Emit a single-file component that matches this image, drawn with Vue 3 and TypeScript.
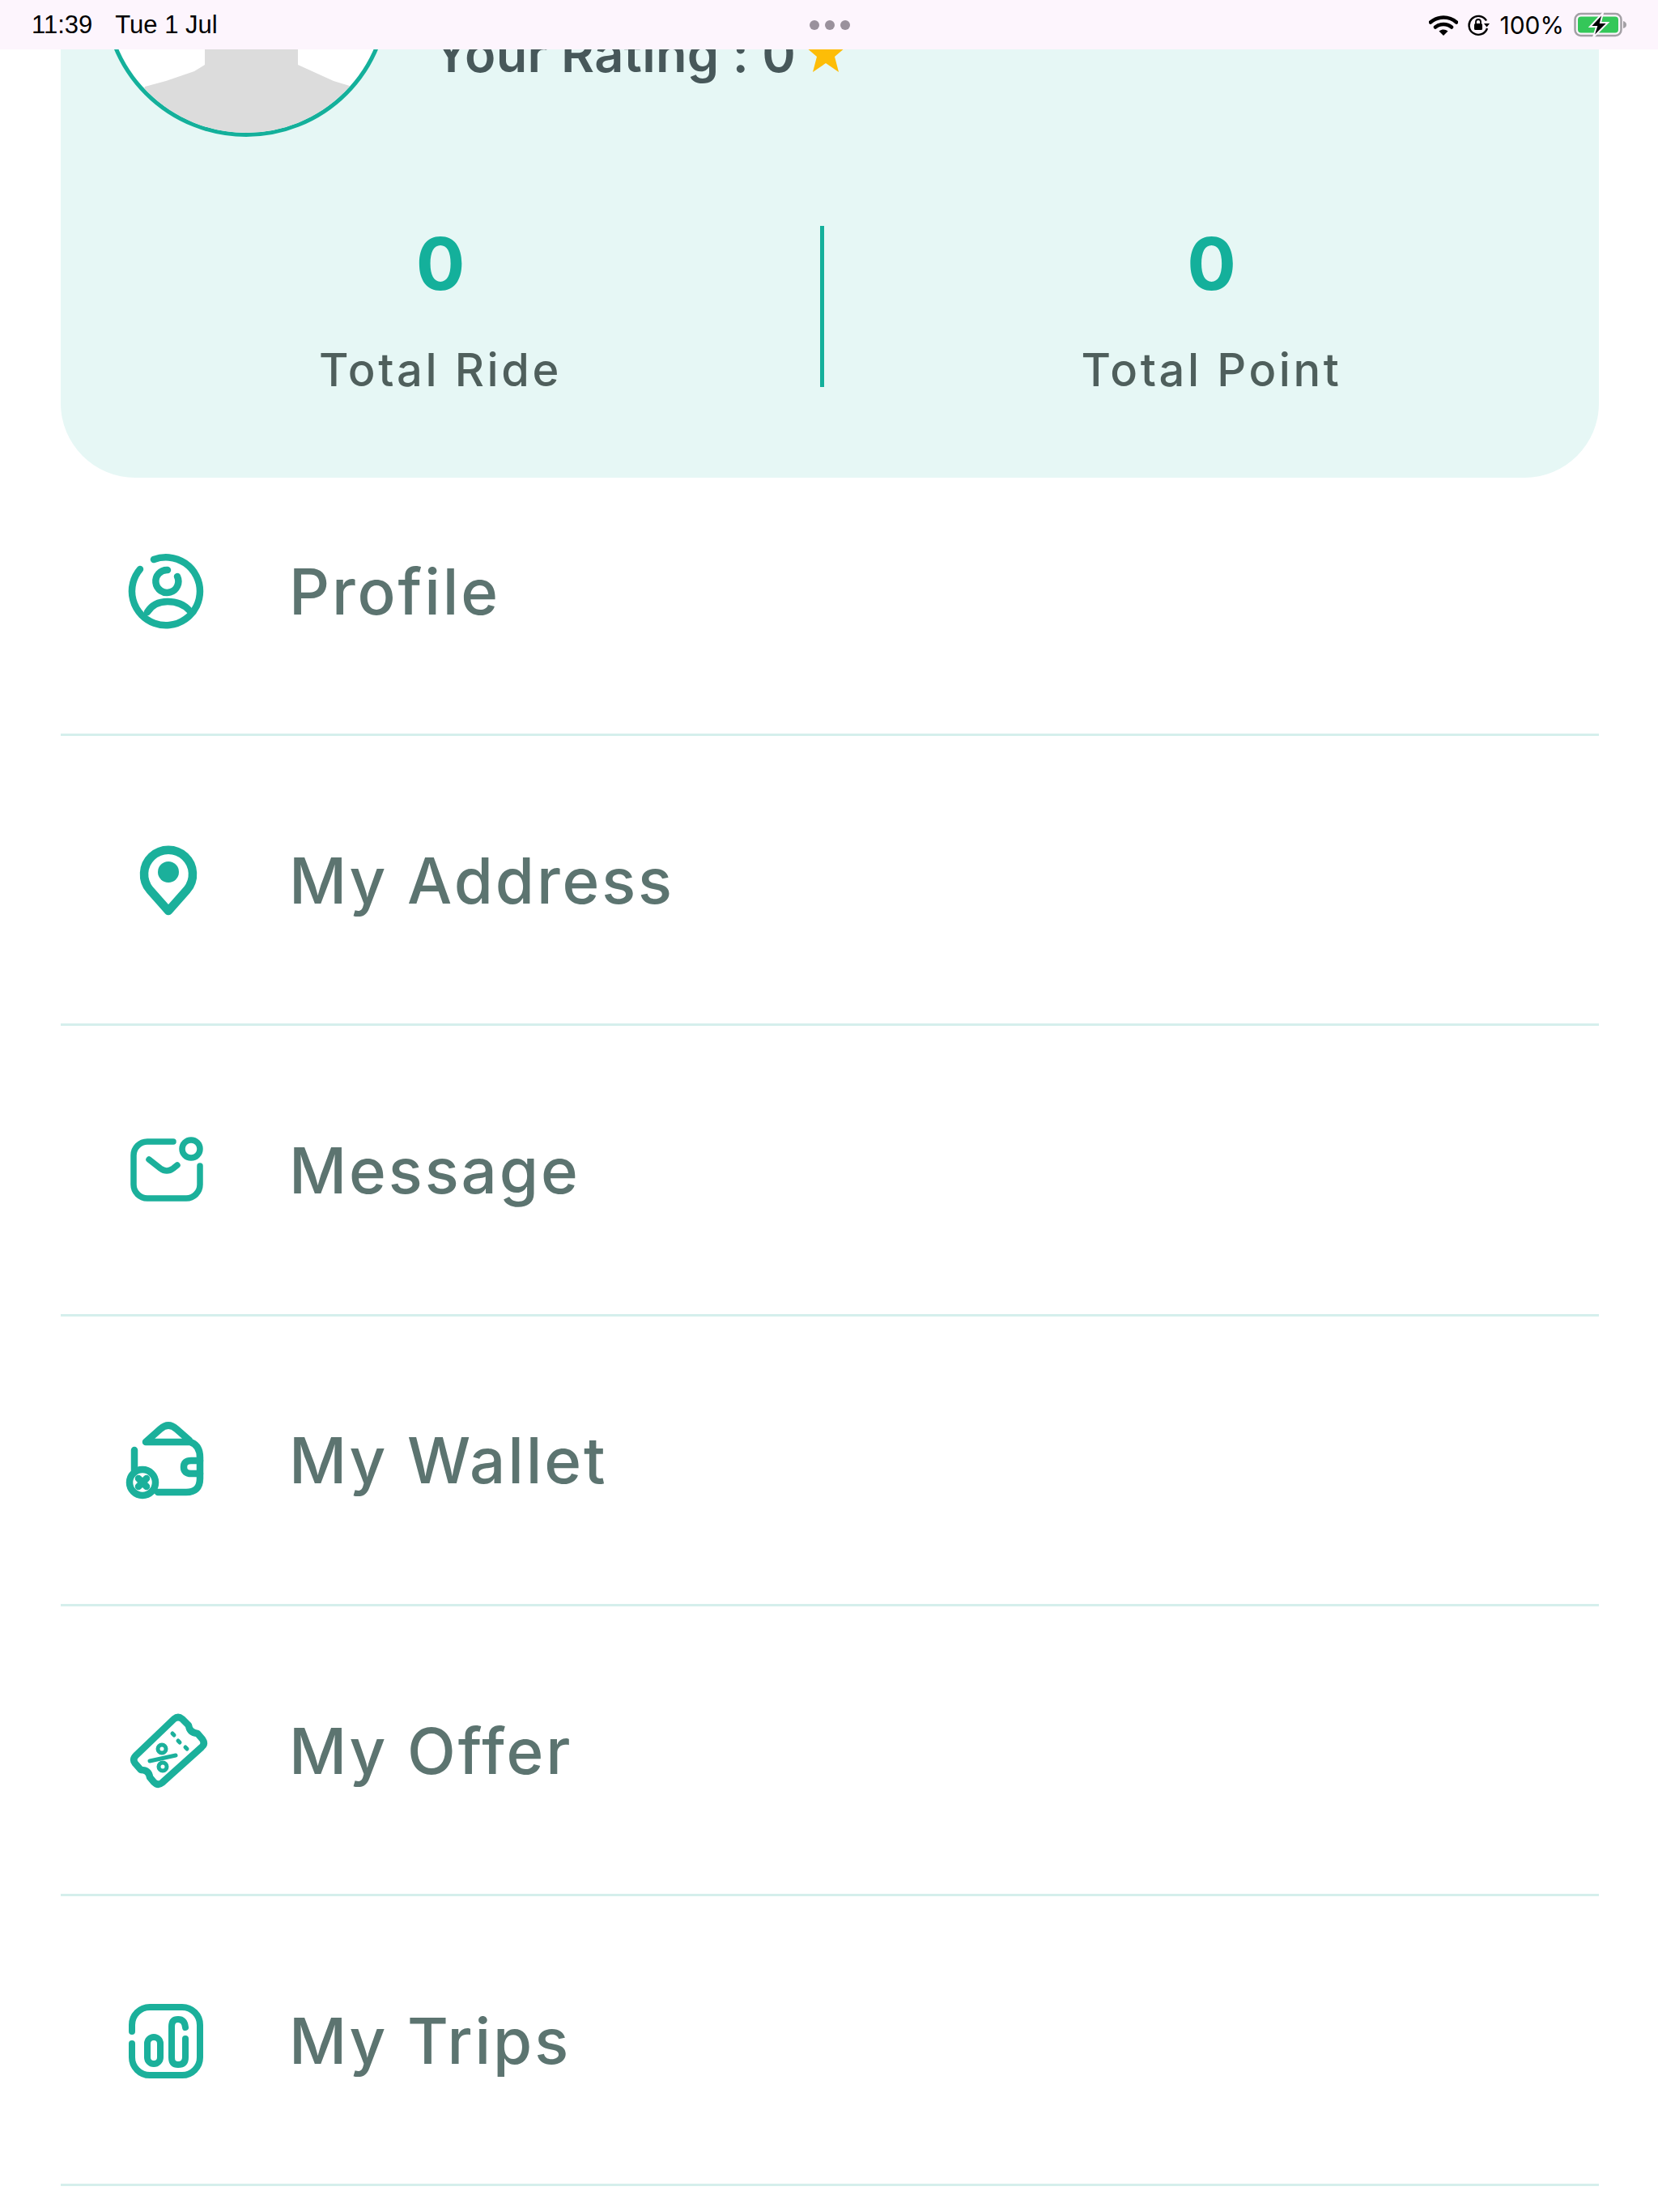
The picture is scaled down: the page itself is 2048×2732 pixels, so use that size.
<script setup lang="ts">
interface MenuItem {
  key: string
  label: string
}

const menu: MenuItem[] = [
  { key: 'profile', label: 'Profile' },
  { key: 'address', label: 'My Address' },
  { key: 'message', label: 'Message' },
  { key: 'wallet', label: 'My Wallet' },
  { key: 'offer', label: 'My Offer' },
  { key: 'trips', label: 'My Trips' }
]
</script>

<template>
  <div class="screen">
    <!-- iPad status bar -->
    <header class="status-bar">
      <div class="status-left">
        <span>11:39</span>
        <span>Tue 1 Jul</span>
      </div>
      <div class="status-dots"><i></i><i></i><i></i></div>
      <div class="status-right">
        <svg class="wifi" width="36" height="26" viewBox="0 0 36 26">
          <path d="M2 9.500C11 1.500 25 1.500 34 9.500" fill="none" stroke="#000" stroke-width="4.500" stroke-linecap="round" />
          <path d="M8 15.500C13.500 10.800 22.500 10.800 28 15.500" fill="none" stroke="#000" stroke-width="4.500" stroke-linecap="round" />
          <path d="M12.500 20.500C15.500 17.800 20.500 17.800 23.500 20.500L18 26Z" fill="#000" />
        </svg>
        <svg class="lock" width="28" height="28" viewBox="0 0 28 28">
          <path d="M24 8.500A11.500 11.500 0 1 0 25 18" fill="none" stroke="#000" stroke-width="2.400" />
          <path d="M21 12H28L24.500 16.500Z" fill="#000" />
          <rect x="9" y="12" width="10" height="8" rx="1.500" fill="#000" />
          <path d="M11 12V10A3 3 0 0 1 17 10V12" fill="none" stroke="#000" stroke-width="1.800" />
        </svg>
        <span class="battery-text">100%</span>
        <svg class="battery" width="66" height="32" viewBox="0 0 66 32">
          <rect x="1.500" y="2" width="57" height="27" rx="7" fill="none" stroke="#a3a0a5" stroke-width="2.500" />
          <rect x="5" y="5.500" width="50" height="20" rx="4" fill="#34c759" />
          <path d="M61 11C64 12 65 13.500 65 15.500C65 17.500 64 19 61 20Z" fill="#a3a0a5" />
          <path d="M36 1L20 18H28L24 31L42 13H33Z" fill="#000" stroke="#fdf5fd" stroke-width="2" />
        </svg>
      </div>
    </header>

    <main class="content">
      <section class="summary-card">
        <div class="user-row">
          <div class="avatar">
            <svg width="344" height="344" viewBox="5 5 344 344">
              <path d="M126 200V265L113 273L78 285L52 292L30 354H326L308 292L285 285L241 265V200Z" fill="#dcdcdc" />
            </svg>
          </div>
          <div class="rating">
            <span>Your Rating : 0</span>
            <svg class="rating-star" width="52" height="50" viewBox="0 0 52 50">
              <path d="M26 0L33 18H51L37 30L42 49L26 38L10 49L15 30L1 18H19Z" fill="#fdbd07" />
            </svg>
          </div>
        </div>

        <div class="stats">
          <div class="stat">
            <div class="stat-value">0</div>
            <div class="stat-label">Total Ride</div>
          </div>
          <div class="stat-divider"></div>
          <div class="stat">
            <div class="stat-value">0</div>
            <div class="stat-label">Total Point</div>
          </div>
        </div>
      </section>

      <nav class="menu">
        <div v-for="item in menu" :key="item.key" class="menu-row" :class="`menu-row--${item.key}`">
          <svg class="menu-icon" width="140" height="140" viewBox="0 0 140 140" fill="none" stroke="#1bb09b" stroke-linecap="round" stroke-linejoin="round">
            <g v-if="item.key === 'profile'" stroke-width="8.500">
              <path d="M58 31A42 42 0 1 1 41 43" />
              <path d="M75 44A14 14 0 1 0 87 52" />
              <path d="M50 96Q58 83 75 83Q92 83 102 94" />
            </g>
            <g v-else-if="item.key === 'address'">
              <path d="M78 107L55 81A30 30 0 1 1 101 81Z" stroke-width="10.500" />
              <circle cx="78" cy="59" r="13" fill="#1bb09b" stroke="none" />
            </g>
            <g v-else-if="item.key === 'message'" stroke-width="7.500">
              <path d="M84 30H52A17 17 0 0 0 35 47V83A17 17 0 0 0 52 100H100A17 17 0 0 0 117 83V60" />
              <circle cx="106" cy="39" r="11" />
              <path d="M54 52L68 63Q76 69 84 63L89 59" />
            </g>
            <g v-else-if="item.key === 'wallet'" stroke-width="8.500">
              <path d="M50 43L68 27Q78 18 88 27L104 41M50 43H105Q117 47 117 62V88Q117 105 100 105H65" />
              <path d="M36 53V78" />
              <circle cx="46" cy="93" r="16" />
              <path d="M41 88L51 98M51 88L41 98" />
              <path d="M117 66H106Q97 66 97 74Q97 82 106 82H117" />
            </g>
            <g v-else-if="item.key === 'offer'" stroke-width="8.500">
              <path d="M85 25Q90 21 95 25L103 33Q104 42 114 43L120 50Q124 56 119 60L70 104Q65 108 60 103L55 97Q54 88 44 88L37 80Q33 75 38 70Z" />
              <path d="M83 43L85 45M90 52L92 54M99 60L101 62" stroke-width="5" />
              <path d="M55 77L87 70" stroke-width="5" />
              <circle cx="70" cy="62" r="5" stroke-width="5" />
              <circle cx="71" cy="84" r="5" stroke-width="5" />
            </g>
            <g v-else stroke-width="8">
              <path d="M33 53V45A22 22 0 0 1 55 23H95A22 22 0 0 1 117 45V85A22 22 0 0 1 95 107H55A22 22 0 0 1 33 85V68" />
              <rect x="52" y="60" width="16" height="33" rx="8" />
              <path d="M99 48Q98 38 90 38Q82 38 82 47V85Q82 94 90 94Q99 94 99 85V62" />
            </g>
          </svg>
          <span class="menu-label">{{ item.label }}</span>
        </div>
      </nav>
    </main>
  </div>
</template>

<style>
html,
body {
  margin: 0;
  background: #ffffff;
}
</style>

<style scoped>
.screen {
  display: flex;
  flex-direction: column;
  width: 2048px;
  height: 2732px;
  overflow: hidden;
  background: #ffffff;
  font-family: Inter, "Liberation Sans", sans-serif;
}

.status-bar {
  position: relative;
  z-index: 2;
  flex: 0 0 61px;
  display: flex;
  align-items: center;
  justify-content: space-between;
  padding: 0 38px 0 39px;
  background: #fdf5fd;
  color: #000000;
}

.status-left {
  display: flex;
  gap: 28px;
  width: 300px;
  font-family: "Liberation Sans", sans-serif;
  font-size: 31px;
  white-space: nowrap;
}

.status-dots {
  display: flex;
  gap: 7px;
}

.status-dots i {
  width: 12px;
  height: 12px;
  border-radius: 50%;
  background: #9a919c;
}

.status-right {
  display: flex;
  align-items: center;
  justify-content: flex-end;
  width: 300px;
}

.wifi {
  margin-right: 11px;
}

.battery-text {
  margin: 0 12px;
  font-size: 30px;
  white-space: nowrap;
}

.content {
  flex: 1;
  min-height: 0;
}

.summary-card {
  margin: -286px 73px 0 75px;
  padding: 40px 0 112px;
  background: #e6f7f5;
  border-radius: 0 0 92px 92px;
}

.user-row {
  display: flex;
  align-items: flex-end;
  padding-left: 52px;
}

.avatar {
  width: 344px;
  height: 344px;
  overflow: hidden;
  background: #ffffff;
  border: 5px solid #14b09b;
  border-radius: 50%;
}

.avatar svg {
  display: block;
}

.rating {
  display: flex;
  align-items: flex-end;
  gap: 11px;
  margin: 0 0 71px 54px;
  color: #47585a;
  font-size: 63px;
  font-weight: 600;
  line-height: 1;
  letter-spacing: 0.300px;
  white-space: nowrap;
}

.rating-star {
  margin-bottom: 8px;
}

.stats {
  display: grid;
  grid-template-columns: 938px 5px 1fr;
  grid-template-rows: 199px;
  margin-top: 110px;
}

.stat {
  display: flex;
  flex-direction: column;
  align-items: center;
}

.stat-divider {
  background: #14b09b;
}

.stat-value {
  margin-top: 2px;
  color: #14b09b;
  font-size: 90px;
  font-weight: 700;
  line-height: 90px;
}

.stat-label {
  margin-top: 52px;
  color: #4f5f5c;
  font-size: 56px;
  font-weight: 500;
  line-height: 68px;
  letter-spacing: 3.600px;
}

.menu {
  margin: 0 73px 0 75px;
}

.menu-row {
  display: flex;
  align-items: center;
  height: 355.300px;
  padding-left: 55px;
  border-bottom: 3px solid #d5efec;
}

.menu-row--profile {
  height: 280px;
  padding-bottom: 36px;
}

.menu-icon {
  flex: none;
  margin-right: 87px;
}

.menu-row--profile .menu-icon {
  margin-left: 2px;
  margin-right: 85px;
}

.menu-row--address .menu-icon {
  margin-top: 3px;
}

.menu-row--message .menu-icon,
.menu-row--wallet .menu-icon {
  margin-top: 10px;
}

.menu-row--offer .menu-icon,
.menu-row--trips .menu-icon {
  margin-top: 12px;
}

.menu-label {
  margin-top: 2px;
  color: #5c7470;
  font-size: 78px;
  font-weight: 450;
  letter-spacing: 2.900px;
  line-height: 1;
}
</style>
